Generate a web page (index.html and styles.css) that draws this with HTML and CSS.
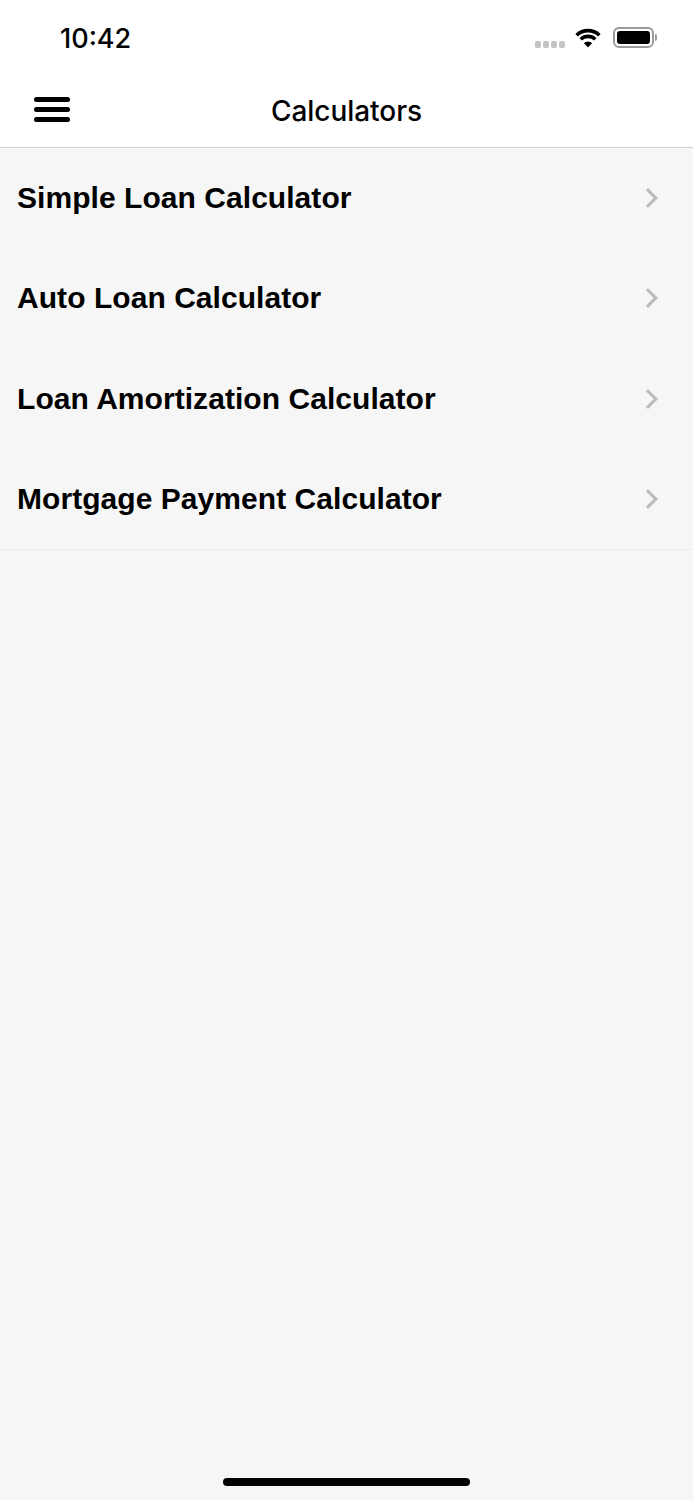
FILE: index.html
```html
<!DOCTYPE html>
<html lang="en">

<head>
    <meta charset="UTF-8">
    <meta name="viewport" content="width=device-width, initial-scale=1.0">
    <title>Calculators</title>

    <link rel="stylesheet" href="styles.css">
</head>

<body>
    <div class="top">
        <div class="status-bar">
            <span class="time">10:42</span>
            <div class="status-icons">
                <div class="signal">
                    <span></span><span></span><span></span><span></span>
                </div>
                <svg class="wifi" width="26" height="20" viewBox="0 0 26 20">
                    <path d="M1.6 7.2a16.5 16.5 0 0 1 22.8 0" />
                    <path d="M5.7 11.3a10.6 10.6 0 0 1 14.6 0" />
                    <path class="wifi-dot" d="M13 19.6l-4.2-4.5a6 6 0 0 1 8.4 0z" />
                </svg>
                <div class="battery">
                    <div class="battery-body">
                        <div class="battery-level"></div>
                    </div>
                    <div class="battery-cap"></div>
                </div>
            </div>
        </div>

        <div class="nav-bar">
            <button class="menu-btn">
                <span></span><span></span><span></span>
            </button>
            <h1 class="nav-title">Calculators</h1>
        </div>
    </div>

    <div class="calc-list">
        <div class="calc-row">
            <span class="calc-name">Simple Loan Calculator</span>
            <span class="chevron"></span>
        </div>
        <div class="calc-row">
            <span class="calc-name">Auto Loan Calculator</span>
            <span class="chevron"></span>
        </div>
        <div class="calc-row">
            <span class="calc-name">Loan Amortization Calculator</span>
            <span class="chevron"></span>
        </div>
        <div class="calc-row">
            <span class="calc-name">Mortgage Payment Calculator</span>
            <span class="chevron"></span>
        </div>
    </div>

    <div class="home-area">
        <div class="home-bar"></div>
    </div>
</body>

</html>
```

FILE: styles.css
```css
* {
    box-sizing: border-box;
}

body {
    display: flex;
    flex-direction: column;
    margin: 0;
    height: 1500px;
    font-family: "Liberation Sans", Arial, sans-serif;
    color: #000;
    background: #f6f6f6;
}

.top {
    height: 148px;
    background: #fff;
    border-bottom: 1px solid #d0d0d0;
}

.status-bar {
    display: flex;
    justify-content: space-between;
    align-items: center;
    height: 76px;
    padding: 0 36px 0 60px;
}

.time {
    font-family: Inter, "Liberation Sans", sans-serif;
    font-size: 27px;
    font-weight: 500;
}

.status-icons {
    display: flex;
    align-items: center;
}

.signal {
    display: flex;
    gap: 1.5px;
    margin: 13px 10px 0 0;
}

.signal span {
    width: 6.5px;
    height: 6.5px;
    border-radius: 2px;
    background: #c4c4c4;
}

.wifi {
    margin-right: 12px;
}

.wifi path {
    fill: none;
    stroke: #000;
    stroke-width: 3.6;
}

.wifi .wifi-dot {
    fill: #000;
    stroke: none;
}

.battery {
    display: flex;
    align-items: center;
    margin-top: -1px;
}

.battery-body {
    width: 41px;
    height: 21px;
    padding: 2px;
    border: 2px solid #9a9a9a;
    border-radius: 6px;
}

.battery-level {
    height: 100%;
    border-radius: 3px;
    background: #000;
}

.battery-cap {
    width: 2px;
    height: 7px;
    margin-left: 1px;
    border-radius: 0 2px 2px 0;
    background: #9a9a9a;
}

.nav-bar {
    display: flex;
    align-items: center;
    justify-content: center;
    position: relative;
    height: 71px;
}

.menu-btn {
    all: unset;
    display: flex;
    flex-direction: column;
    gap: 5px;
    position: absolute;
    left: 34px;
    top: 21px;
    width: 36px;
}

.menu-btn span {
    height: 5px;
    border-radius: 3px;
    background: #000;
}

.nav-title {
    margin: 0 0 2px;
    font-family: Inter, "Liberation Sans", sans-serif;
    font-size: 28px;
    font-weight: 500;
    letter-spacing: -0.05px;
}

.calc-list {
    border-bottom: 1px solid #ebebeb;
}

.calc-row {
    display: flex;
    justify-content: space-between;
    align-items: center;
    height: 100.25px;
    padding: 0 37px 0 17px;
    font-size: 30px;
    font-weight: 700;
    letter-spacing: 0.05px;
}

.chevron {
    width: 14px;
    height: 14px;
    margin-right: 1px;
    border-top: 3.5px solid #bbb;
    border-right: 3.5px solid #bbb;
    transform: rotate(45deg);
}

.home-area {
    display: flex;
    justify-content: center;
    align-items: flex-end;
    flex: 1;
    padding-bottom: 14px;
}

.home-bar {
    width: 247px;
    height: 8px;
    border-radius: 4px;
    background: #000;
}
```
